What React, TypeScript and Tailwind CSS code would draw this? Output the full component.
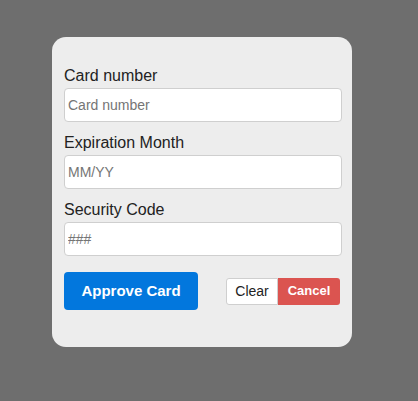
const fieldClass =
  "block h-[34px] w-[278px] rounded-[4px] border border-[#cfcfcf] bg-white px-[3px] text-[14px] text-[#222] placeholder:text-[#757575] outline-none";

const Field = ({
  label,
  placeholder,
  last,
}: {
  label: string;
  placeholder: string;
  last?: boolean;
}) => (
  <div className={last ? "" : "mb-[11px]"}>
    <label className="mb-[2px] block text-[16px] leading-[20px] text-[#222]">
      {label}
    </label>
    <input type="text" placeholder={placeholder} className={fieldClass} />
  </div>
);

export default function App() {
  return (
    <div
      className="min-h-[401px] w-full bg-[#6e6e6e] pl-[52px] pt-[37px]"
      style={{ fontFamily: '"Liberation Sans", Arial, sans-serif' }}
    >
      <div className="h-[310px] w-[300px] rounded-[14px] bg-[#ededed] pl-[12px] pt-[29px]">
        <Field label="Card number" placeholder="Card number" />
        <Field label="Expiration Month" placeholder="MM/YY" />
        <Field label="Security Code" placeholder="###" last />

        <div className="mt-[16px] flex w-[276px] items-center justify-between">
          <button
            type="button"
            className="h-[38px] w-[134px] rounded-[4px] bg-[#0277dd] text-[15px] font-bold text-white"
          >
            Approve Card
          </button>
          <div className="flex items-center">
            <button
              type="button"
              className="h-[27px] w-[52px] rounded-l-[3px] border border-[#cfcfcf] bg-white text-[14px] text-[#222]"
            >
              Clear
            </button>
            <button
              type="button"
              className="h-[27px] w-[62px] rounded-r-[3px] bg-[#db5450] text-[13px] font-bold text-white"
            >
              Cancel
            </button>
          </div>
        </div>
      </div>
    </div>
  );
}
